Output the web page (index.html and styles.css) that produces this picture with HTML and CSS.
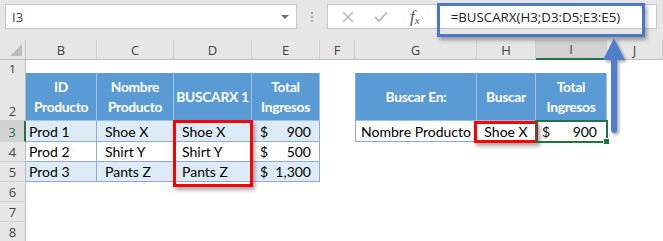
FILE: index.html
```html
<!DOCTYPE html>
<html lang="es">
<head>
<meta charset="utf-8">
<title>BUSCARX</title>
<link rel="stylesheet" href="styles.css">
</head>
<body>
<div class="app">
  <div class="topbar">
    <div class="namebox"><span class="nb-text">I3</span><span class="nb-arrow"></span></div>
    <div class="grip"><i></i><i></i><i></i></div>
    <div class="fbar">
      <svg class="ic ic-x" width="12" height="12" viewBox="0 0 12 12"><path d="M1 1 L11 11 M11 1 L1 11" stroke="#b4b4b4" stroke-width="1.3" fill="none"/></svg>
      <svg class="ic ic-check" width="14" height="12" viewBox="0 0 14 12"><path d="M1 6 L5 10 L13 1.5" stroke="#b4b4b4" stroke-width="1.6" fill="none"/></svg>
      <span class="ic-fx">f<sub>x</sub></span>
      <div class="formula">=BUSCARX(H3;D3:D5;E3:E5)</div>
    </div>
  </div>

  <div class="sheet">
    <div class="row r-h">
      <div class="corner"><span class="tri"></span></div>
      <div class="ch">B</div><div class="ch">C</div><div class="ch">D</div><div class="ch">E</div>
      <div class="ch">F</div><div class="ch">G</div><div class="ch">H</div><div class="ch sel">I</div><div class="ch">J</div>
    </div>
    <div class="row r1">
      <div class="rh">1</div>
      <div></div><div></div><div></div><div></div><div></div><div></div><div></div><div></div><div></div>
    </div>
    <div class="row r2">
      <div class="rh">2</div>
      <div class="th">ID<br>Producto</div>
      <div class="th">Nombre<br>Producto</div>
      <div class="th">BUSCARX 1</div>
      <div class="th">Total<br>Ingresos</div>
      <div></div>
      <div class="th tl">Buscar En:</div>
      <div class="th">Buscar</div>
      <div class="th">Total<br>Ingresos</div>
      <div></div>
    </div>
    <div class="row r3">
      <div class="rh sel">3</div>
      <div class="td alt">Prod 1</div>
      <div class="td alt ind">Shoe X</div>
      <div class="td alt ind">Shoe X</div>
      <div class="td alt acct"><span>$</span><span>900</span></div>
      <div></div>
      <div class="td tl ctr">Nombre Producto</div>
      <div class="td ctr">Shoe X</div>
      <div class="td acct acct2"><span>$</span><span>900</span></div>
      <div></div>
    </div>
    <div class="row r4">
      <div class="rh">4</div>
      <div class="td">Prod 2</div>
      <div class="td ind">Shirt Y</div>
      <div class="td ind">Shirt Y</div>
      <div class="td acct"><span>$</span><span>500</span></div>
      <div></div><div></div><div></div><div></div><div></div>
    </div>
    <div class="row r5">
      <div class="rh">5</div>
      <div class="td alt">Prod 3</div>
      <div class="td alt ind">Pants Z</div>
      <div class="td alt ind">Pants Z</div>
      <div class="td alt acct"><span>$</span><span>1,300</span></div>
      <div></div><div></div><div></div><div></div><div></div>
    </div>
    <div class="row r6"><div class="rh">6</div></div>
    <div class="row r7"><div class="rh">7</div></div>
    <div class="row r8"><div class="rh">8</div></div>
  </div>

  <div class="fbox"></div>
  <div class="redbox rb1"></div>
  <div class="redbox rb2"></div>
  <div class="cellsel"><span class="handle"></span></div>
  <svg class="arrow" width="34" height="110" viewBox="0 0 34 110">
    <defs>
      <filter id="sh" x="-50%" y="-20%" width="200%" height="150%">
        <feDropShadow dx="2" dy="2" stdDeviation="1.8" flood-color="#000" flood-opacity="0.35"/>
      </filter>
    </defs>
    <g filter="url(#sh)" fill="#4f7fcc">
      <polygon points="14,3 25,25 3,25"/>
      <rect x="11" y="22" width="6" height="76" rx="3"/>
    </g>
  </svg>
</div>
</body>
</html>
```

FILE: styles.css
```css
* { box-sizing: border-box; }
html, body { margin: 0; padding: 0; background: #fff; }
body { width: 663px; height: 241px; overflow: hidden; }
.app { position: relative; width: 663px; height: 241px; overflow: hidden; font-family: Lato, "Liberation Sans", sans-serif; }

.topbar { height: 40px; background: #e6e6e6; display: flex; align-items: flex-start; padding-top: 4px; }
.namebox { margin-left: 5px; width: 292px; height: 25px; background: #fff; border: 1px solid #c6c6c6; position: relative; display: flex; align-items: center; }
.nb-text { font-family: "Open Sans", "Noto Sans", sans-serif; font-size: 13px; color: #444; padding-left: 6px; }
.nb-arrow { position: absolute; right: 7px; top: 10px; width: 0; height: 0; border-left: 4px solid transparent; border-right: 4px solid transparent; border-top: 4px solid #6a6a6a; }
.grip { width: 30px; display: flex; flex-direction: column; align-items: center; gap: 2px; padding-top: 8px; }
.grip i { display: block; width: 2px; height: 2px; background: #a8a8a8; }
.fbar { width: 330px; height: 25px; background: #fff; border: 1px solid #c6c6c6; display: flex; align-items: center; position: relative; }
.ic-x { margin-left: 14px; }
.ic-check { margin-left: 20px; }
.ic-fx { margin-left: 22px; font-family: "Liberation Serif", serif; font-style: italic; font-size: 17px; color: #555; line-height: 1; }
.ic-fx sub { font-size: 11px; vertical-align: -2px; }
.formula { margin-left: 31px; font-family: "Open Sans", "Noto Sans", sans-serif; font-size: 13.3px; color: #222; }

.row { display: grid; grid-template-columns: 26px 71px 77px 78px 68px 35px 122px 59px 71px 1fr; }
.r-h { height: 20px; }
.r1 { height: 13px; }
.r2 { height: 48px; }
.r3 { height: 21px; }
.r4, .r5, .r6, .r7, .r8 { height: 20px; }

.corner { background: #e6e6e6; border-right: 1px solid #c8c8c8; border-bottom: 1px solid #bcbcbc; position: relative; }
.tri { position: absolute; right: 3px; bottom: 3px; width: 0; height: 0; border-left: 12px solid transparent; border-bottom: 12px solid #bcbcbc; }
.ch { background: #e6e6e6; border-right: 1px solid #cfcfcf; border-bottom: 1px solid #bcbcbc; font-family: "Open Sans", "Noto Sans", sans-serif; font-size: 13px; color: #444; display: flex; align-items: center; justify-content: center; }
.ch.sel { background: #d2d2d2; border-bottom: 2px solid #217346; }

.rh { background: #e6e6e6; border-right: 1px solid #bcbcbc; border-bottom: 1px solid #d0d0d0; font-family: "Open Sans", "Noto Sans", sans-serif; font-size: 13px; color: #444; display: flex; align-items: flex-end; justify-content: center; line-height: 18px; }
.rh.sel { background: #d2d2d2; border-right: 2px solid #217346; color: #217346; }

.th { background: #5b9bd5; color: #fff; font-weight: bold; font-size: 13.8px; line-height: 20px; letter-spacing: -0.3px; text-align: center; white-space: nowrap; display: flex; align-items: center; justify-content: center; border-right: 1px solid #9bc2e6; border-bottom: 1px solid #9bc2e6; }
.th.tl { border-left: 1px solid #8ea9db; }
.td { font-size: 14px; color: #000; display: flex; align-items: center; padding-left: 3px; border-right: 1px solid #8ea9db; border-bottom: 1px solid #8ea9db; white-space: nowrap; }
.td.alt { background: #ddebf7; }
.td.ind { padding-left: 8px; }
.td.ctr { justify-content: center; padding-left: 0; }
.td.tl { border-left: 1px solid #8ea9db; }
.td.acct { justify-content: space-between; padding: 0 8px; }
.td.acct2 { padding: 0 9px 0 6px; }

.fbox { position: absolute; left: 437px; top: 3px; width: 208px; height: 34px; border: 3px solid #4a78c6; box-shadow: 2px 3px 4px rgba(0,0,0,0.35); }
.redbox { position: absolute; border: 3px solid #f00; box-shadow: 2px 3px 4px rgba(0,0,0,0.35); }
.rb1 { left: 173px; top: 120px; width: 80px; height: 67px; }
.rb2 { left: 474px; top: 121px; width: 64px; height: 22px; }
.cellsel { position: absolute; left: 535px; top: 120px; width: 73px; height: 23px; border: 2px solid #217346; }
.handle { position: absolute; right: -4px; bottom: -4px; width: 5px; height: 5px; background: #217346; border: 1px solid #fff; box-sizing: content-box; }
.arrow { position: absolute; left: 600px; top: 35px; }
```
